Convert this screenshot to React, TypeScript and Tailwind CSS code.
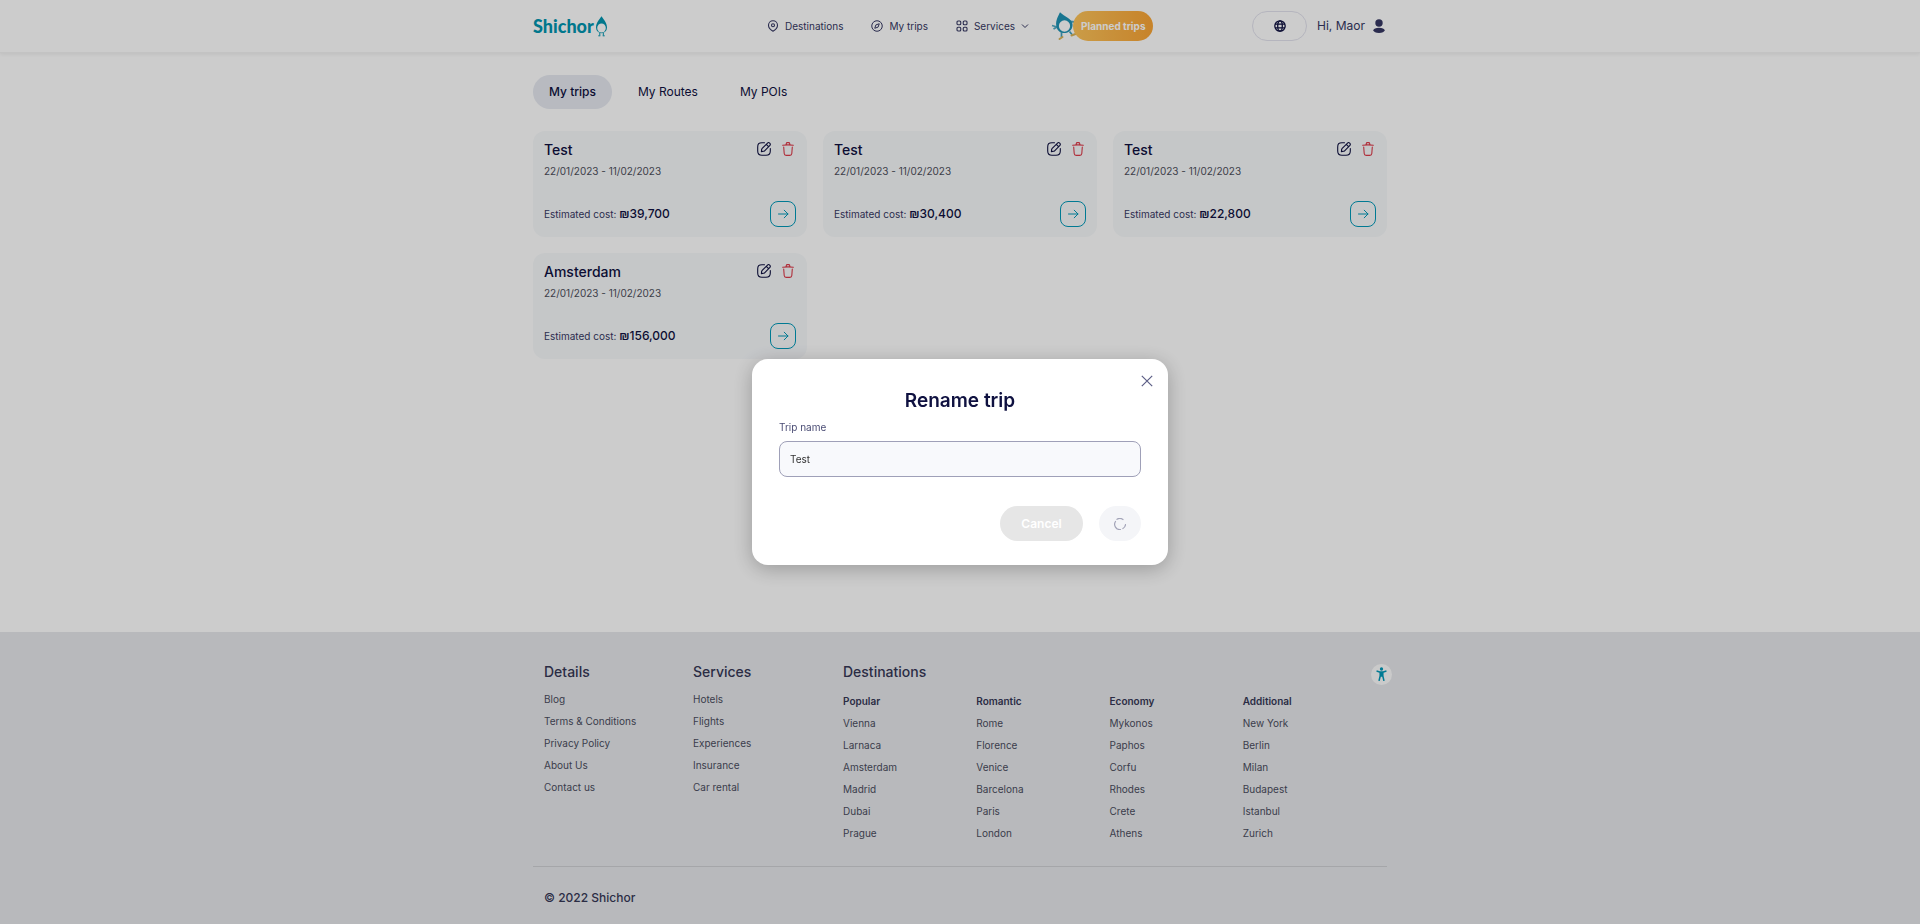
import React, { useState } from "react";

type Trip = { id: number; name: string; dates: string; cost: string };

const trips: Trip[] = [
  { id: 1, name: "Test", dates: "22/01/2023 - 11/02/2023", cost: "₪39,700" },
  { id: 2, name: "Test", dates: "22/01/2023 - 11/02/2023", cost: "₪30,400" },
  { id: 3, name: "Test", dates: "22/01/2023 - 11/02/2023", cost: "₪22,800" },
  { id: 4, name: "Amsterdam", dates: "22/01/2023 - 11/02/2023", cost: "₪156,000" },
];

const details = ["Blog", "Terms & Conditions", "Privacy Policy", "About Us", "Contact us"];
const services = ["Hotels", "Flights", "Experiences", "Insurance", "Car rental"];
const destinations = [
  { title: "Popular", cities: ["Vienna", "Larnaca", "Amsterdam", "Madrid", "Dubai", "Prague"] },
  { title: "Romantic", cities: ["Rome", "Florence", "Venice", "Barcelona", "Paris", "London"] },
  { title: "Economy", cities: ["Mykonos", "Paphos", "Corfu", "Rhodes", "Crete", "Athens"] },
  { title: "Additional", cities: ["New York", "Berlin", "Milan", "Budapest", "Istanbul", "Zurich"] },
];

function Logo() {
  return (
    <a href="#" aria-label="Shichor home" className="flex w-[75px] items-center justify-between text-[#0095b0]">
      <span className="font-['Lato',sans-serif] text-[18px] leading-6 font-black">Shichor</span>
      <svg viewBox="0 0 13 21" className="h-[21px] w-[13px] shrink-0" fill="none" aria-hidden="true">
        <path d="M6.500 .3C4.800 3.200 1 6.500 1 11.500a5.500 5.700 0 0 0 11 0C12 6.500 8.200 3.200 6.500 .3Z" fill="currentColor" />
        <ellipse cx="6.500" cy="12" rx="4.300" ry="4.500" fill="white" />
        <path d="M4.800 17v2.500M8.300 17v2.500M3.300 19.800h2M7.700 19.800h2" stroke="currentColor" strokeWidth="1" />
      </svg>
    </a>
  );
}

function PinIcon() {
  return (
    <svg viewBox="0 0 24 24" className="size-3" fill="none" stroke="currentColor" strokeWidth="2.200" aria-hidden="true">
      <path d="M12 22.500c-3-1.600-9-6-9-12a9 9 0 0 1 18 0c0 6-6 10.400-9 12Z" />
      <circle cx="12" cy="10.500" r="3" />
    </svg>
  );
}

function CompassIcon() {
  return (
    <svg viewBox="0 0 24 24" className="size-3" fill="none" stroke="currentColor" strokeWidth="2" aria-hidden="true">
      <circle cx="12" cy="12" r="10.500" />
      <path d="m16.500 7.500-2.300 6.700-6.700 2.300 2.300-6.700Z" strokeLinejoin="round" />
    </svg>
  );
}

function GridIcon() {
  return (
    <svg viewBox="0 0 24 24" className="size-3" fill="none" stroke="currentColor" strokeWidth="2.200" aria-hidden="true">
      <rect x="2" y="2" width="7.500" height="7.500" rx="2" />
      <rect x="14.500" y="2" width="7.500" height="7.500" rx="2" />
      <rect x="2" y="14.500" width="7.500" height="7.500" rx="2" />
      <rect x="14.500" y="14.500" width="7.500" height="7.500" rx="2" />
    </svg>
  );
}

function Mascot() {
  return (
    <svg viewBox="0 0 26 30" className="h-[30px] w-[26px]" fill="none" aria-hidden="true">
      <path d="M1 14.500l5 1.500M2.500 18l3.500-2M19 10.500l5 .5" stroke="#4fa9c4" strokeWidth="1.800" />
      <path d="M9 1.200C7.500 4.500 4.600 9 5.200 14.500c.6 5 4.300 8 9 7.500 4.800-.5 7.800-4.500 7.300-9C20.800 7.500 13.500 5.500 9 1.200Z" fill="#1f93b5" />
      <ellipse cx="13.500" cy="15" rx="5.600" ry="5.800" fill="white" />
      <path d="M10.500 21v5M18.500 20.500l2.500 3" stroke="#3fa0bd" strokeWidth="1.700" />
      <path d="M8.500 28l3-2M20.500 24.500l4-1.500" stroke="#d9b45a" strokeWidth="2" strokeLinecap="round" />
    </svg>
  );
}

function Header() {
  return (
    <header className="border-b border-[#f4f4f4] bg-white shadow-[0_1px_4px_rgba(0,0,0,0.08)]">
      <div className="mx-auto flex h-[52px] max-w-[854px] items-center text-[#363863]">
        <Logo />
        <nav className="ml-[159px] flex items-center gap-7 text-[10px]">
          <a href="#" className="flex items-center gap-1.5"><PinIcon />Destinations</a>
          <a href="#" className="flex items-center gap-1.5"><CompassIcon />My trips</a>
          <button type="button" className="flex items-center gap-1.5">
            <GridIcon />Services
            <svg viewBox="0 0 8 8" className="size-2" fill="none" stroke="currentColor" aria-hidden="true"><path d="m1 2.500 3 3 3-3" /></svg>
          </button>
        </nav>
        <a href="#" className="ml-[22px] flex items-center">
          <Mascot />
          <span className="-ml-1 flex h-[30px] items-center rounded-full bg-linear-to-r from-[#fdc45a] to-[#f9a434] px-2 text-[10px] font-bold text-white">Planned trips</span>
        </a>
        <div className="ml-auto flex items-center gap-2.5">
          <button type="button" aria-label="Language" className="flex h-[30px] w-[55px] items-center justify-center rounded-full border border-[#e3e3ee] text-[#0f1140]">
            <svg viewBox="0 0 12 12" className="size-3" fill="none" stroke="currentColor" strokeWidth="1.300" aria-hidden="true">
              <circle cx="6" cy="6" r="5.200" />
              <ellipse cx="6" cy="6" rx="2.300" ry="5.200" />
              <path d="M1 4.200h10M1 7.800h10" />
            </svg>
          </button>
          <button type="button" className="flex items-center gap-2 pr-0.5 text-[12px]">
            Hi, Maor
            <svg viewBox="0 0 12 14" className="h-3.5 w-3" fill="currentColor" aria-hidden="true">
              <circle cx="6" cy="4" r="3.700" />
              <ellipse cx="6" cy="11.300" rx="5.600" ry="2.600" />
            </svg>
          </button>
        </div>
      </div>
    </header>
  );
}

function TripCard({ trip }: { trip: Trip }) {
  return (
    <article className="flex flex-col justify-between rounded-xl bg-[#f7f9fb] p-[11px] pb-2.5 text-[#0f1140]">
      <div>
        <div className="flex h-[14px] items-center justify-between">
          <h2 className="text-[14px] font-medium">{trip.name}</h2>
          <div className="flex items-center gap-[11px] pr-0.5">
            <button type="button" aria-label={`Rename ${trip.name}`}>
              <svg viewBox="0 0 14 14" className="size-3.5" fill="none" stroke="currentColor" strokeWidth="1.100" strokeLinecap="round" strokeLinejoin="round" aria-hidden="true">
                <path d="M7.500 .7H5C1.800 .7.700 1.800.700 5v4c0 3.200 1.100 4.300 4.300 4.300h4c3.200 0 4.300-1.100 4.300-4.300V6.500" />
                <path d="M10.300 1.300 5.200 6.400c-.3.300-.5.600-.5 1l-.3 2.200 2.200-.3c.4 0 .7-.2 1-.5l5.100-5.100c.9-.9.900-1.600 0-2.500s-1.500-.8-2.400.1ZM9.500 2.200c.4 1.200 1.100 1.900 2.300 2.300" />
              </svg>
            </button>
            <button type="button" aria-label={`Delete ${trip.name}`} className="text-[#dc3b4a]">
              <svg viewBox="0 0 12 14" className="h-3.5 w-3" fill="none" stroke="currentColor" strokeWidth="1.100" strokeLinecap="round" strokeLinejoin="round" aria-hidden="true">
                <path d="M.600 3.200c3.600-.4 7.200-.4 10.800 0M4 2.800l.3-1.200c.1-.6.300-1 1-1h1.400c.7 0 .9.400 1 1L8 2.800M10.300 5l-.5 6.500c-.1 1.200-.4 1.900-1.900 1.900H4.100c-1.500 0-1.800-.7-1.900-1.900L1.700 5" />
              </svg>
            </button>
          </div>
        </div>
        <p className="mt-[7px] text-[10px] leading-4 text-[#4d4f5c]">{trip.dates}</p>
      </div>
      <div className="mt-[22px] flex items-center justify-between">
        <p className="text-[10px] leading-4 text-[#363863]">
          Estimated cost: <strong className="text-[12px] font-medium text-[#0f1140]">{trip.cost}</strong>
        </p>
        <button type="button" aria-label={`Open ${trip.name}`} className="flex size-[26px] items-center justify-center rounded-lg border border-[#0099b8] text-[#0099b8]">
          <svg viewBox="0 0 11 10" className="h-2.5 w-[11px]" fill="none" stroke="currentColor" strokeLinecap="round" strokeLinejoin="round" aria-hidden="true">
            <path d="M.500 5h9.500M6.200 1.200 10 5 6.200 8.800" />
          </svg>
        </button>
      </div>
    </article>
  );
}

function LinkList({ items }: { items: string[] }) {
  return (
    <ul className="text-[10px] leading-[22px] text-[#4b4d5e]">
      {items.map((item) => (
        <li key={item}><a href="#">{item}</a></li>
      ))}
    </ul>
  );
}

function Footer() {
  return (
    <footer className="bg-[#e6e8ec] text-[#363856]">
      <div className="relative mx-auto max-w-[854px]">
        <div className="grid grid-cols-[149px_150px_1fr] px-[11px] pt-[30px] pb-[22px]">
          <section>
            <h2 className="mb-1.5 text-[14px] leading-5 font-medium">Details</h2>
            <LinkList items={details} />
          </section>
          <section>
            <h2 className="mb-1.5 text-[14px] leading-5 font-medium">Services</h2>
            <LinkList items={services} />
          </section>
          <section>
            <h2 className="mb-2 text-[14px] leading-5 font-medium">Destinations</h2>
            <div className="grid grid-cols-4">
              {destinations.map((group) => (
                <div key={group.title}>
                  <h3 className="text-[10px] leading-[22px] font-semibold">{group.title}</h3>
                  <LinkList items={group.cities} />
                </div>
              ))}
            </div>
          </section>
        </div>
        <p className="border-t border-[#cfd0d4] px-[11px] pt-[21px] pb-4 text-[12px] leading-5 font-medium">© 2022 Shichor</p>
        <button type="button" aria-label="Accessibility" className="absolute top-8 -right-[5px] flex size-[21px] items-center justify-center rounded-full bg-[#fdfdfd] text-[#0099b8]">
          <svg viewBox="0 0 12 16" className="h-[15px] w-[11px]" aria-hidden="true">
            <circle cx="6" cy="2" r="1.800" fill="currentColor" />
            <path d="M.600 4.300 4 5.200h4l3.400-.9M4.600 5.500v4L3.300 15M7.400 5.500v4L8.700 15M6 5.500v5" fill="none" stroke="currentColor" strokeWidth="1.700" strokeLinejoin="round" />
          </svg>
        </button>
      </div>
    </footer>
  );
}

function RenameDialog() {
  const [name, setName] = useState("Test");
  return (
    <div className="fixed inset-0 z-10 flex items-center justify-center bg-black/20">
      <form
        role="dialog"
        aria-modal="true"
        aria-labelledby="rename-title"
        onSubmit={(event: React.FormEvent) => event.preventDefault()}
        className="relative w-full max-w-[416px] rounded-2xl bg-white px-[27px] pt-[30px] pb-6 shadow-[0_4px_20px_rgba(0,0,0,0.25)]"
      >
        <button type="button" aria-label="Close" className="absolute top-4 right-[15px] text-[#5c5e86]">
          <svg viewBox="0 0 12 12" className="size-3" fill="none" stroke="currentColor" strokeWidth="1.200" aria-hidden="true">
            <path d="m.800.800 10.400 10.400M11.200.800.800 11.200" />
          </svg>
        </button>
        <h2 id="rename-title" className="text-center text-[19px] leading-6 font-semibold text-[#0f1140]">Rename trip</h2>
        <label htmlFor="trip-name" className="mt-1.5 block text-[10px] leading-4 text-[#4a4c74]">Trip name</label>
        <input
          id="trip-name"
          value={name}
          onChange={(event) => setName(event.target.value)}
          className="mt-1.5 h-9 w-full rounded-lg border border-[#9fa0b8] bg-[#f8f9fc] px-2.5 text-[10px] text-[#333] outline-none"
        />
        <div className="mt-[29px] flex justify-end gap-4">
          <button type="button" disabled className="h-[35px] w-[83px] rounded-full bg-[#e6e6e6] text-[12px] font-semibold text-white">Cancel</button>
          <button type="submit" disabled aria-label="Saving" className="flex h-[35px] w-[42px] items-center justify-center rounded-full bg-[#f4f5f8] text-[#a3a4b8]">
            <svg viewBox="0 0 12 12" className="size-3" fill="none" stroke="currentColor" strokeWidth="1.200" strokeLinecap="round" aria-hidden="true">
              <path d="M3 1.300a5.200 5.200 0 0 1 6 .2M11.500 6.500a5.200 5.200 0 0 1-2.600 4M6.500 11.500a5.200 5.200 0 0 1-5-8" />
            </svg>
          </button>
        </div>
      </form>
    </div>
  );
}

export default function App() {
  return (
    <div className="flex min-h-screen flex-col bg-white font-['Inter','Noto_Sans',sans-serif] text-[#0f1140]">
      <Header />
      <main className="mx-auto w-full max-w-[854px] flex-1 pt-[22px] pb-8">
        <nav className="flex gap-2.5 text-[12px]">
          <a href="#" aria-current="page" className="flex h-[34px] items-center rounded-full bg-[#e6e9f1] px-4 font-medium">My trips</a>
          <a href="#" className="flex h-[34px] items-center px-4">My Routes</a>
          <a href="#" className="flex h-[34px] items-center px-4">My POIs</a>
        </nav>
        <div className="mt-[22px] grid grid-cols-3 gap-4">
          {trips.map((trip) => (
            <TripCard key={trip.id} trip={trip} />
          ))}
        </div>
      </main>
      <Footer />
      <RenameDialog />
    </div>
  );
}
